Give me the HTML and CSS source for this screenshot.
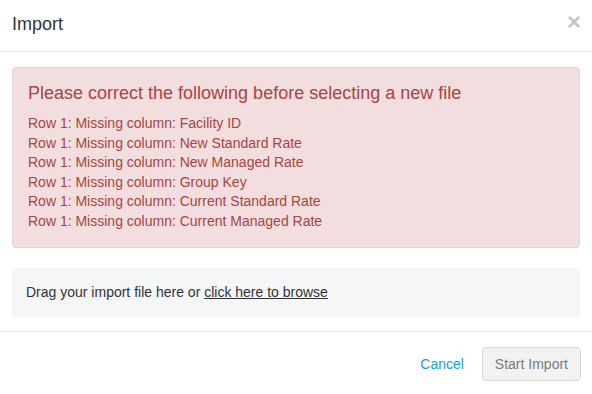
FILE: index.html
```html
<!DOCTYPE html>
<html lang="en">

<head>
    <meta charset="UTF-8">
    <title>Import</title>
    <link rel="stylesheet" href="styles.css">
</head>

<body>
    <div class="modal">
        <div class="modal-header">
            <h4 class="modal-title">Import</h4>
            <span class="close">&times;</span>
        </div>
        <div class="modal-body">
            <div class="alert">
                <h4 class="alert-title">Please correct the following before selecting a new file</h4>
                <ul class="errors">
                    <li>Row 1: Missing column: Facility ID</li>
                    <li>Row 1: Missing column: New Standard Rate</li>
                    <li>Row 1: Missing column: New Managed Rate</li>
                    <li>Row 1: Missing column: Group Key</li>
                    <li>Row 1: Missing column: Current Standard Rate</li>
                    <li>Row 1: Missing column: Current Managed Rate</li>
                </ul>
            </div>
            <div class="dropzone">
                Drag your import file here or <a href="#">click here to browse</a>
            </div>
        </div>
        <div class="modal-footer">
            <a href="#" class="cancel">Cancel</a>
            <button class="btn" disabled>Start Import</button>
        </div>
    </div>
</body>

</html>
```

FILE: styles.css
```css
body {
    margin: 0;
    background-color: white;
    font-family: "Liberation Sans", Arial, sans-serif;
    font-size: 14px;
    color: #333;
}

h4,
ul,
li {
    margin: 0;
    padding: 0;
}

.modal {
    width: 592px;
}

.modal-header {
    display: flex;
    justify-content: space-between;
    align-items: center;
    height: 51px;
    padding: 0 12px;
    border-bottom: 1px solid #e5e5e5;
}

.modal-title {
    font-size: 18px;
    font-weight: normal;
    line-height: 20px;
    margin-top: -4px;
}

.close {
    font-size: 24px;
    font-weight: bold;
    line-height: 1;
    color: #c4c4c4;
    margin-top: -7px;
    margin-right: -1px;
}

.modal-body {
    padding: 15px 12px 14px;
}

.alert {
    background-color: #f2dede;
    border: 1px solid #ebccd1;
    border-radius: 4px;
    color: #a94442;
    padding: 15px 15px 15px;
}

.alert-title {
    font-size: 18px;
    font-weight: normal;
    line-height: 20px;
    margin-bottom: 11px;
}

.errors li {
    list-style: none;
    line-height: 19.6px;
}

.dropzone {
    margin-top: 20px;
    background-color: #f5f6f8;
    padding: 14px 14px;
    line-height: 21px;
    color: #333;
}

.dropzone a {
    color: #333;
    text-decoration: underline;
}

.modal-footer {
    display: flex;
    justify-content: flex-end;
    align-items: center;
    gap: 18px;
    padding: 15px 12px 15px;
    border-top: 1px solid #e5e5e5;
}

.cancel {
    color: #1a9ed9;
    text-decoration: none;
}

.btn {
    font-family: inherit;
    font-size: 14px;
    color: #7a7a7a;
    background-color: #f2f2f2;
    border: 1px solid #d6d6d6;
    border-radius: 4px;
    height: 34px;
    padding: 0 12px;
    margin-right: -1px;
}
```
